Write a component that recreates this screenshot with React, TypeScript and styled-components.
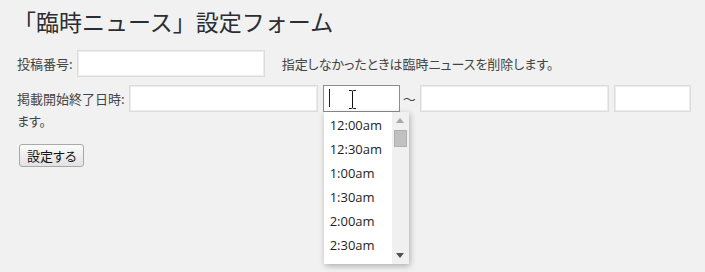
import React from "react";
import styled, { createGlobalStyle } from "styled-components";

const Global = createGlobalStyle`
  html, body { margin: 0; padding: 0; background: #f1f1f1; }
  body {
    font-family: "Noto Sans CJK JP", "Noto Sans", sans-serif;
    color: #444;
    font-size: 13px;
  }
  #root { width: 705px; height: 272px; overflow: hidden; }
`;

const Page = styled.div`
  box-sizing: border-box;
  width: 705px;
  padding: 7px 0 0 17px;
`;

const Title = styled.h2`
  margin: 0 0 0 -4px;
  font-size: 23px;
  font-weight: 400;
  line-height: 29px;
  color: #2a2e33;
`;

const Row = styled.div<{ $top: number }>`
  display: flex;
  flex-wrap: wrap;
  align-items: center;
  align-content: flex-start;
  margin-top: ${(p) => p.$top}px;
  width: 688px;
`;

const Text = styled.span<{ $ml?: number; $mr?: number; $lh?: number }>`
  font-feature-settings: "palt";
  line-height: ${(p) => p.$lh ?? 20}px;
  white-space: nowrap;
  color: #444;
  margin-left: ${(p) => p.$ml ?? 0}px;
  margin-right: ${(p) => p.$mr ?? 0}px;
`;

const Input = styled.input<{ $w: number; $ml?: number; $focus?: boolean }>`
  box-sizing: border-box;
  width: ${(p) => p.$w}px;
  height: 27px;
  margin: 0 0 0 ${(p) => p.$ml ?? 0}px;
  padding: 0 5px;
  background: #fff;
  border: 1px solid ${(p) => (p.$focus ? "#8d8d8d" : "#dcdcdc")};
  box-shadow: ${(p) => (p.$focus ? "none" : "inset 0 0 0 1px #ececec")};
  outline: none;
  font: inherit;
`;

const TimeField = styled.div<{ $ml: number }>`
  position: relative;
  margin-left: ${(p) => p.$ml}px;
  display: flex;
`;

const Caret = styled.span`
  position: absolute;
  left: 6px;
  top: 4px;
  width: 1px;
  height: 18px;
  background: #222;
`;

const IBeam = styled.svg`
  position: absolute;
  left: 25px;
  top: 5px;
`;

const Dropdown = styled.div`
  position: absolute;
  left: 1px;
  top: 27px;
  width: 85px;
  height: 152px;
  display: flex;
  background: #fff;
  box-shadow: 1px 2px 6px rgba(0, 0, 0, 0.28);
  z-index: 5;
`;

const OptionList = styled.div`
  flex: 1;
  display: flex;
  flex-direction: column;
  padding: 1px 0 0 6px;
  overflow: hidden;
`;

const Option = styled.div`
  font-family: "Open Sans", "Noto Sans", sans-serif;
  font-size: 13px;
  line-height: 24px;
  height: 24px;
  color: #1e1e1e;
  white-space: nowrap;
`;

const Track = styled.div`
  width: 17px;
  background: #f0f0f0;
  display: flex;
  flex-direction: column;
  align-items: center;
`;

const ArrowBtn = styled.div`
  width: 17px;
  height: 17px;
  display: flex;
  align-items: center;
  justify-content: center;
`;

const Thumb = styled.div`
  box-sizing: border-box;
  width: 13px;
  height: 17px;
  margin-top: 1px;
  background: #c1c1c1;
  border: 1px solid #b0b0b0;
`;

const Spacer = styled.div`
  flex: 1;
`;

const Tilde = styled.span`
  font-size: 13px;
  line-height: 20px;
  color: #444;
  margin: 0 4px 0 3px;
`;

const Button = styled.button`
  box-sizing: border-box;
  margin: 15px 0 0 2px;
  height: 23px;
  padding: 0 7px;
  font-family: "Noto Sans CJK JP", sans-serif;
  font-feature-settings: "palt";
  font-size: 13px;
  line-height: 20px;
  color: #111;
  background: linear-gradient(#fbfbfb, #e2e2e2);
  border: 1px solid #a9a9a9;
  border-radius: 3px;
`;

const times = ["12:00am", "12:30am", "1:00am", "1:30am", "2:00am", "2:30am"];

export default function App() {
  return (
    <>
      <Global />
      <Page>
        <Title>「臨時ニュース」設定フォーム</Title>
        <Row $top={14}>
          <Text $mr={4}>投稿番号:</Text>
          <Input $w={188} />
          <Text $ml={17}>指定しなかったときは臨時ニュースを削除します。</Text>
        </Row>
        <Row $top={8}>
          <Text $mr={4}>掲載開始終了日時:</Text>
          <Input $w={189} />
          <TimeField $ml={5}>
            <Input $w={77} $focus />
            <Caret />
            <IBeam width="9" height="19" viewBox="0 0 9 19">
              <path d="M1 0.5h2.5M5.5 0.5H8M3.5 0.5c1 0 1 1 1 1.5v15c0 0.5 0 1.5-1 1.5M5.5 0.5c-1 0-1 1-1 1.5M5.5 18.5c-1 0-1-1-1-1.5M1 18.5h2.5M5.5 18.5H8" stroke="#111" strokeWidth="1" fill="none" />
            </IBeam>
            <Dropdown>
              <OptionList>
                {times.map((t) => (
                  <Option key={t}>{t}</Option>
                ))}
              </OptionList>
              <Track>
                <ArrowBtn>
                  <svg width="8" height="5" viewBox="0 0 8 5">
                    <polygon points="4,0 8,5 0,5" fill="#a6a6a6" />
                  </svg>
                </ArrowBtn>
                <Thumb />
                <Spacer />
                <ArrowBtn>
                  <svg width="8" height="5" viewBox="0 0 8 5">
                    <polygon points="0,0 8,0 4,5" fill="#505050" />
                  </svg>
                </ArrowBtn>
              </Track>
            </Dropdown>
          </TimeField>
          <Tilde>～</Tilde>
          <Input $w={189} />
          <Input $w={77} $ml={5} />
          <Text $lh={17}>ます。</Text>
        </Row>
        <Button>設定する</Button>
      </Page>
    </>
  );
}
